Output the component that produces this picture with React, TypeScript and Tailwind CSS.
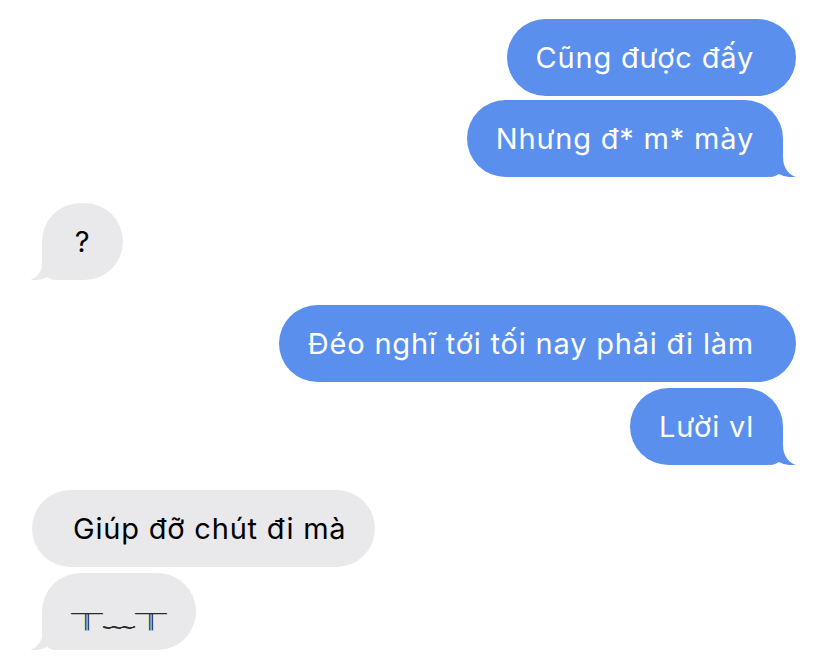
import React from "react";

type Message = {
  id: number;
  text: string;
  fromMe: boolean;
  tail: boolean;
  spacing: string;
};

const messages: Message[] = [
  { id: 1, text: "Cũng được đấy", fromMe: true, tail: false, spacing: "mt-[19px]" },
  { id: 2, text: "Nhưng đ* m* mày", fromMe: true, tail: true, spacing: "mt-[4px]" },
  { id: 3, text: "?", fromMe: false, tail: true, spacing: "mt-[26px]" },
  { id: 4, text: "Đéo nghĩ tới tối nay phải đi làm", fromMe: true, tail: false, spacing: "mt-[25px]" },
  { id: 5, text: "Lười vl", fromMe: true, tail: true, spacing: "mt-[6px]" },
  { id: 6, text: "Giúp đỡ chút đi mà", fromMe: false, tail: false, spacing: "mt-[25px]" },
  { id: 7, text: "╥﹏╥", fromMe: false, tail: true, spacing: "mt-[6px]" },
];

const BLUE = "#5a8fee";
const GRAY = "#e9e9eb";

function Tail({ fromMe }: { fromMe: boolean }) {
  return (
    <svg
      width="26"
      height="30"
      viewBox="0 0 26 30"
      className={
        fromMe
          ? "absolute bottom-0 -right-[13px]"
          : "absolute bottom-0 -left-[12px] -scale-x-100"
      }
    >
      <path
        d="M0 0H13V10C13 19 17 26.5 25.5 30C19 30.6 13.5 29.4 9 27C6 29 3 30 0 30Z"
        fill={fromMe ? BLUE : GRAY}
      />
    </svg>
  );
}

function Bubble({ message }: { message: Message }) {
  const { text, fromMe, tail } = message;
  const isEmoticon = text === "╥﹏╥";

  let shape = "rounded-[38.5px]";
  if (tail) shape = fromMe ? "rounded-[38.5px] rounded-br-[16px] mr-[13px]" : "rounded-[38.5px] rounded-bl-[16px] ml-[10px]";

  let pad = "px-[29px]";
  if (!tail) pad = fromMe ? "pl-[29px] pr-[42px]" : "pl-[41px] pr-[29px]";

  return (
    <div className={`flex ${fromMe ? "justify-end" : "justify-start"} ${message.spacing}`}>
      <div
        className={`relative h-[77px] min-w-[81px] flex items-center justify-center ${shape} ${pad} ${
          fromMe ? "bg-[#5a8fee] text-white" : "bg-[#e9e9eb] text-black"
        }`}
      >
        <span
          className={
            isEmoticon
              ? "text-[32px] leading-none pt-[6px] whitespace-nowrap text-[#2a2a2a]"
              : "text-[29px] leading-[34px] tracking-[0.8px] whitespace-nowrap"
          }
        >
          {text}
        </span>
        {tail && <Tail fromMe={fromMe} />}
      </div>
    </div>
  );
}

export default function App() {
  return (
    <div
      className="w-[828px] h-[662px] bg-white overflow-hidden px-[32px]"
      style={{ fontFamily: 'Inter, "Noto Sans", "Noto Sans CJK SC", "DejaVu Sans", sans-serif' }}
    >
      <div className="flex flex-col">
        {messages.map((m) => (
          <Bubble key={m.id} message={m} />
        ))}
      </div>
    </div>
  );
}
